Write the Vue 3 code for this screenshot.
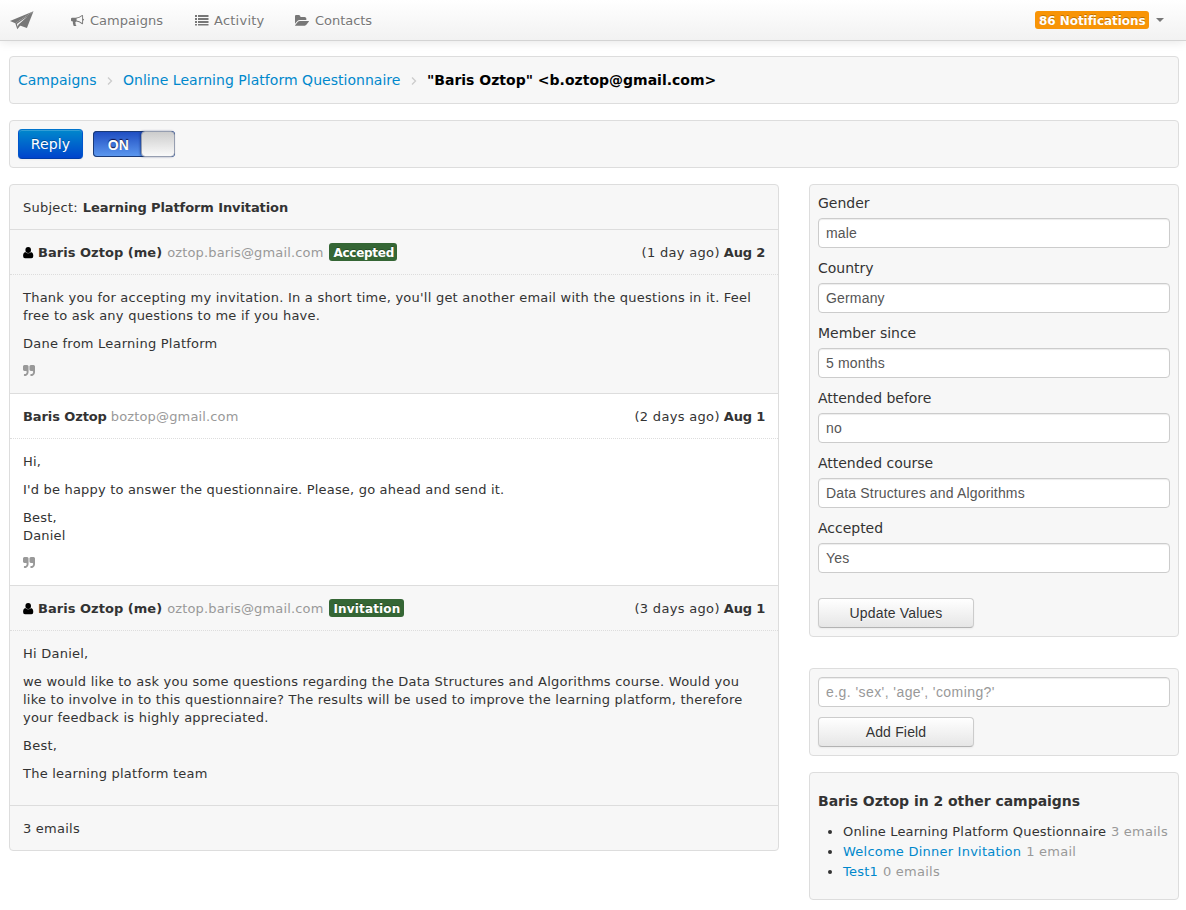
<script setup>
import { ref } from 'vue'

const quotePath = 'M768 320v704q0 104-40.5 198.5t-109.5 163.5-163.5 109.5-198.5 40.5h-64q-26 0-45-19t-19-45v-128q0-26 19-45t45-19h64q106 0 181-75t75-181v-32q0-40-28-68t-68-28h-224q-80 0-136-56t-56-136v-384q0-80 56-136t136-56h384q80 0 136 56t56 136z'

const emails = [
  {
    me: true, name: 'Baris Oztop (me)', address: 'oztop.baris@gmail.com', tag: 'Accepted',
    ago: '(1 day ago)', date: 'Aug 2', quoted: true,
    body: [
      ["Thank you for accepting my invitation. In a short time, you'll get another email with the questions in it. Feel", 'free to ask any questions to me if you have.'],
      ['Dane from Learning Platform']
    ]
  },
  {
    me: false, name: 'Baris Oztop', address: 'boztop@gmail.com', tag: '',
    ago: '(2 days ago)', date: 'Aug 1', quoted: true,
    body: [
      ['Hi,'],
      ["I'd be happy to answer the questionnaire. Please, go ahead and send it."],
      ['Best,', 'Daniel']
    ]
  },
  {
    me: true, name: 'Baris Oztop (me)', address: 'oztop.baris@gmail.com', tag: 'Invitation',
    ago: '(3 days ago)', date: 'Aug 1', quoted: false,
    body: [
      ['Hi Daniel,'],
      ['we would like to ask you some questions regarding the Data Structures and Algorithms course. Would you', 'like to involve in to this questionnaire? The results will be used to improve the learning platform, therefore', 'your feedback is highly appreciated.'],
      ['Best,'],
      ['The learning platform team']
    ]
  }
]

const fields = ref([
  { label: 'Gender', value: 'male' },
  { label: 'Country', value: 'Germany' },
  { label: 'Member since', value: '5 months' },
  { label: 'Attended before', value: 'no' },
  { label: 'Attended course', value: 'Data Structures and Algorithms' },
  { label: 'Accepted', value: 'Yes' }
])

const campaigns = [
  { name: 'Online Learning Platform Questionnaire', count: '3 emails', current: true },
  { name: 'Welcome Dinner Invitation', count: '1 email' },
  { name: 'Test1', count: '0 emails' }
]
</script>

<template>
  <div class="page">
    <nav class="navbar">
      <svg class="brand" width="24" height="19" viewBox="0 0 24 19">
        <path d="M23.5 .3L0 10l5.300 2.300z" />
        <path d="M23.5 .3L5.300 12.300l2 5.900 2.600-3.300z" />
        <path d="M23.5 .3L8.500 14l8.400 3z" />
        <path class="fold" d="M18 5L6.900 12.900l.8 2.900.8-2.300z" />
      </svg>
      <a class="nav-item campaigns">
        <svg width="13" height="13" viewBox="0 0 1792 1792"><path d="M1664 640q53 0 90.5 37.5t37.5 90.5-37.5 90.5-90.5 37.5v384q0 52-38 90t-90 38q-417-347-812-380-58 19-91 66t-31 100.5 40 92.5q-20 33-23 65.5t6 58 33.5 55 48 50 61.5 50.5q-29 58-111.5 83t-168.5 11.5-132-55.5q-7-23-29.5-87.5t-32-94.5-23-89-15-101 3.5-98.5 22-110.5h-122q-66 0-113-47t-47-113v-192q0-66 47-113t113-47h480q435 0 896-384 52 0 90 38t38 90v384zm-128 604v-954q-394 302-768 343v270q377 42 768 341z" /></svg>
        <span>Campaigns</span>
      </a>
      <a class="nav-item activity">
        <svg width="14" height="12" viewBox="0 0 14 12"><path d="M0 1h2v2H0zM3 1h10.500v2H3zM0 4h2v2H0zM3 4h10.500v2H3zM0 7h2v2H0zM3 7h10.500v2H3zM0 10h2v1.500H0zM3 10h10.500v1.500H3z" /></svg>
        <span>Activity</span>
      </a>
      <a class="nav-item contacts">
        <svg width="14" height="13" viewBox="0 0 1820 1690"><path d="M1815 952q0 31-31 66l-336 396q-43 51-120.5 86.5t-143.5 35.5h-1088q-34 0-60.5-13t-26.5-43q0-31 31-66l336-396q43-51 120.5-86.5t143.5-35.5h1088q34 0 60.5 13t26.5 43zm-343-344v160h-832q-94 0-197 47.5t-164 119.5l-337 396-5 6q0-4-.5-12.5t-.5-12.5v-960q0-92 66-158t158-66h320q92 0 158 66t66 158v32h544q92 0 158 66t66 158z" /></svg>
        <span>Contacts</span>
      </a>
      <div class="notifications">
        <span class="badge orange">86 Notifications</span>
        <i class="caret"></i>
      </div>
    </nav>

    <div class="panel crumbs">
      <a>Campaigns</a>
      <svg class="sep" width="6" height="8" viewBox="0 0 6 8"><path d="M1 .5L4.5 4 1 7.5" /></svg>
      <a class="crumb-mid">Online Learning Platform Questionnaire</a>
      <svg class="sep" width="6" height="8" viewBox="0 0 6 8"><path d="M1 .5L4.5 4 1 7.5" /></svg>
      <strong>"Baris Oztop" &lt;b.oztop@gmail.com&gt;</strong>
    </div>

    <div class="panel toolbar">
      <button class="reply">Reply</button>
      <div class="switch"><span>ON</span><i></i></div>
    </div>

    <div class="columns">
      <section class="panel thread">
        <header class="row subject"><span>Subject:</span><strong>Learning Platform Invitation</strong></header>
        <article v-for="mail in emails" :key="mail.ago" :class="{ plain: !mail.me }">
          <div class="row mail-head">
            <svg v-if="mail.me" class="user" width="11" height="12" viewBox="0 0 11 12">
              <ellipse cx="5.2" cy="3" rx="2.8" ry="3" />
              <path d="M2.5 4.900C.8 5.300 .1 6.700.1 9q0 2.200 1.900 2.200h6.400q1.900 0 1.900-2.200C10.300 6.700 9.600 5.300 7.900 4.900 7.200 6 6.300 6.300 5.200 6.300S3.200 6 2.500 4.900z" />
            </svg>
            <strong :class="{ own: mail.me }">{{ mail.name }}</strong>
            <span class="muted address">{{ mail.address }}</span>
            <span v-if="mail.tag" class="badge green" :class="mail.tag.toLowerCase()">{{ mail.tag }}</span>
            <span class="ago">{{ mail.ago }}</span>
            <strong class="date">{{ mail.date }}</strong>
          </div>
          <div class="mail-body" :class="{ open: !mail.quoted }">
            <p v-for="(lines, p) in mail.body" :key="p">
              <template v-for="(line, l) in lines" :key="l"><br v-if="l" />{{ line }}</template>
            </p>
            <div v-if="mail.quoted" class="quote">
              <svg width="12" height="11" viewBox="0 128 1664 1408" preserveAspectRatio="none">
                <path :d="quotePath" />
                <path :d="quotePath" transform="translate(896 0)" />
              </svg>
            </div>
          </div>
        </article>
        <footer class="row foot">3 emails</footer>
      </section>

      <aside>
        <form class="panel values" @submit.prevent>
          <label v-for="f in fields" :key="f.label">
            <span>{{ f.label }}</span>
            <input v-model="f.value" type="text" />
          </label>
          <button class="btn">Update Values</button>
        </form>
        <form class="panel add" @submit.prevent>
          <input type="text" placeholder="e.g. 'sex', 'age', 'coming?'" />
          <button class="btn">Add Field</button>
        </form>
        <div class="panel others">
          <h5>Baris Oztop in 2 other campaigns</h5>
          <ul>
            <li v-for="c in campaigns" :key="c.name">
              <span v-if="c.current">{{ c.name }}</span><a v-else>{{ c.name }}</a>
              <span class="muted">{{ ' ' + c.count }}</span>
            </li>
          </ul>
        </div>
      </aside>
    </div>
  </div>
</template>

<style>
body {
  background: #fff;
}
</style>

<style scoped>
.page {
  height: 910px;
  overflow: hidden;
  color: #333;
  font: 13px/18px "DejaVu Sans", Verdana, sans-serif;
  letter-spacing: 0.235px;
}
.page *, .page *::before {
  box-sizing: border-box;
}
a {
  color: #08c;
}
strong {
  letter-spacing: -0.1px;
}
.muted {
  color: #999;
}
.navbar {
  display: flex;
  align-items: center;
  height: 41px;
  padding: 0 22px 0 10px;
  color: #777;
  fill: #777;
  background: linear-gradient(#fff, #f2f2f2);
  border-bottom: 1px solid #d4d4d4;
  box-shadow: 0 1px 10px rgba(0, 0, 0, 0.1);
}
.navbar svg {
  flex: none;
}
.brand .fold {
  fill: #f8f8f8;
}
.nav-item {
  display: flex;
  align-items: center;
  color: #777;
  text-shadow: 0 1px 0 #fff;
}
.nav-item span {
  padding-top: 2px;
}
.campaigns {
  gap: 6px;
  margin-left: 37px;
  width: 124px;
  letter-spacing: 0.02px;
}
.activity {
  gap: 5px;
  width: 100px;
}
.contacts {
  gap: 6px;
  letter-spacing: -0.04px;
}
.notifications {
  display: flex;
  align-items: center;
  gap: 7px;
  margin-left: auto;
}
.badge {
  height: 18px;
  padding: 0 4px;
  border-radius: 3px;
  color: #fff;
  font-size: 12px;
  font-weight: bold;
  line-height: 20px;
  white-space: nowrap;
  text-shadow: 0 -1px 0 rgba(0, 0, 0, 0.25);
}
.orange {
  width: 114px;
  background: #f89406;
  letter-spacing: -0.05px;
}
.green {
  margin: 0 0 2px 2px;
  background: #356635;
}
.green.accepted {
  width: 68px;
  letter-spacing: -0.27px;
}
.green.invitation {
  width: 75px;
  letter-spacing: 0.15px;
}
.caret {
  border: 4px solid transparent;
  border-top-color: #777;
  border-bottom: 0;
}
.panel {
  background: #f7f7f7;
  border: 1px solid #ddd;
  border-radius: 4px;
}
.crumbs {
  display: flex;
  align-items: center;
  height: 48px;
  margin: 15px 7px 0 9px;
  padding: 0 8px;
  font-size: 14px;
  line-height: 20px;
  letter-spacing: 0.01px;
}
.crumb-mid {
  letter-spacing: 0.03px;
}
.crumbs strong {
  color: #000;
  letter-spacing: 0;
}
.sep {
  margin: 1px 10.500px 0 10px;
  fill: none;
  stroke: #ccc;
  stroke-width: 1.3;
}
.toolbar {
  display: flex;
  align-items: center;
  gap: 10px;
  height: 48px;
  margin: 16px 7px 16px 9px;
  padding: 0 8px;
}
.reply {
  width: 65px;
  height: 30px;
  padding: 0;
  border: 1px solid;
  border-color: #0074cc #05c #003ca8;
  border-radius: 4px;
  background: linear-gradient(#08c, #04c);
  color: #fff;
  font: 14px/20px "DejaVu Sans", Verdana, sans-serif;
  letter-spacing: 0.1px;
  text-shadow: 0 -1px 0 rgba(0, 0, 0, 0.25);
  box-shadow: inset 0 1px 0 rgba(255, 255, 255, 0.2), 0 1px 2px rgba(0, 0, 0, 0.05);
}
.switch {
  display: flex;
  width: 82px;
  height: 26px;
  border-radius: 4px;
  background: linear-gradient(#1d4bc0, #5e9af0);
  box-shadow: inset 0 0 0 1px #1a3a77;
}
.switch span {
  width: 48px;
  padding-left: 3px;
  color: #fff;
  text-align: center;
  font: bold 14px/28px "Liberation Sans", Arial, sans-serif;
  text-shadow: 0 -1px 1px #114;
}
.switch i {
  width: 34px;
  border: 1px solid #969eb0;
  border-radius: 4px;
  background: linear-gradient(#ccc, #fafafa);
  box-shadow: -1px 0 2px rgba(10, 30, 90, 0.5);
}
.columns {
  display: flex;
  align-items: flex-start;
  gap: 30px;
  margin: 0 7px 0 9px;
}
.thread {
  width: 770px;
}
.row {
  display: flex;
  align-items: center;
  height: 45px;
  padding: 2px 13px 0;
  white-space: nowrap;
}
.subject {
  gap: 5px;
  border-bottom: 1px solid #ddd;
}
.mail-head {
  gap: 4px;
  border-bottom: 1px dotted #ddd;
}
.user {
  margin-bottom: 1px;
  fill: #000;
}
.own {
  margin-right: 1px;
  letter-spacing: 0.03px;
}
.address {
  letter-spacing: 0.15px;
}
.ago {
  margin-left: auto;
  letter-spacing: 0.32px;
}
.date {
  letter-spacing: -0.2px;
}
.mail-body {
  padding: 14px 0 12px 13px;
  border-bottom: 1px solid #ddd;
  white-space: nowrap;
}
.open {
  padding-bottom: 22px;
}
.mail-body p {
  margin: 0 0 10px;
}
.open p:last-child {
  margin: 0;
}
.plain {
  background: #fff;
}
.plain .mail-body {
  letter-spacing: 0.19px;
}
.quote {
  height: 18px;
  padding-top: 2px;
  fill: #999;
}
.quote svg {
  display: block;
}
.foot {
  height: 44px;
}
aside {
  width: 370px;
}
aside .panel {
  padding: 8px;
}
label {
  display: block;
  margin-bottom: 10px;
  font-size: 14px;
  line-height: 20px;
  letter-spacing: -0.02px;
}
label span {
  display: block;
  margin-bottom: 5px;
}
input {
  display: block;
  width: 352px;
  height: 30px;
  margin: 0;
  padding: 0 7px;
  border: 1px solid #ccc;
  border-radius: 4px;
  background: #fff;
  color: #555;
  font: 14px/20px "Liberation Sans", Arial, sans-serif;
  letter-spacing: 0.17px;
  box-shadow: inset 0 1px 1px rgba(0, 0, 0, 0.075);
}
input::placeholder {
  color: #999;
  opacity: 1;
  letter-spacing: 0.43px;
}
.btn {
  display: block;
  width: 156px;
  height: 30px;
  padding: 0;
  border: 1px solid;
  border-color: #ccc #ccc #b3b3b3;
  border-radius: 4px;
  background: linear-gradient(#fff, #e6e6e6);
  color: #333;
  font: 14px/20px "Liberation Sans", Arial, sans-serif;
  letter-spacing: 0.17px;
  text-shadow: 0 1px 1px rgba(255, 255, 255, 0.75);
  box-shadow: inset 0 1px 0 rgba(255, 255, 255, 0.2), 0 1px 2px rgba(0, 0, 0, 0.05);
}
.values .btn {
  margin-top: 25px;
}
.add {
  margin-top: 31px;
}
.add .btn {
  margin-top: 10px;
}
.others {
  margin-top: 16px;
}
h5 {
  margin: 10px 0 11px;
  font-size: 14px;
  line-height: 20px;
  letter-spacing: -0.03px;
}
ul {
  margin: 0 0 9px 25px;
  padding: 0;
  line-height: 20px;
  white-space: nowrap;
  letter-spacing: 0.17px;
}
ul a {
  letter-spacing: 0.23px;
}
ul .muted {
  margin-left: 0.5px;
  letter-spacing: 0.25px;
}
</style>
